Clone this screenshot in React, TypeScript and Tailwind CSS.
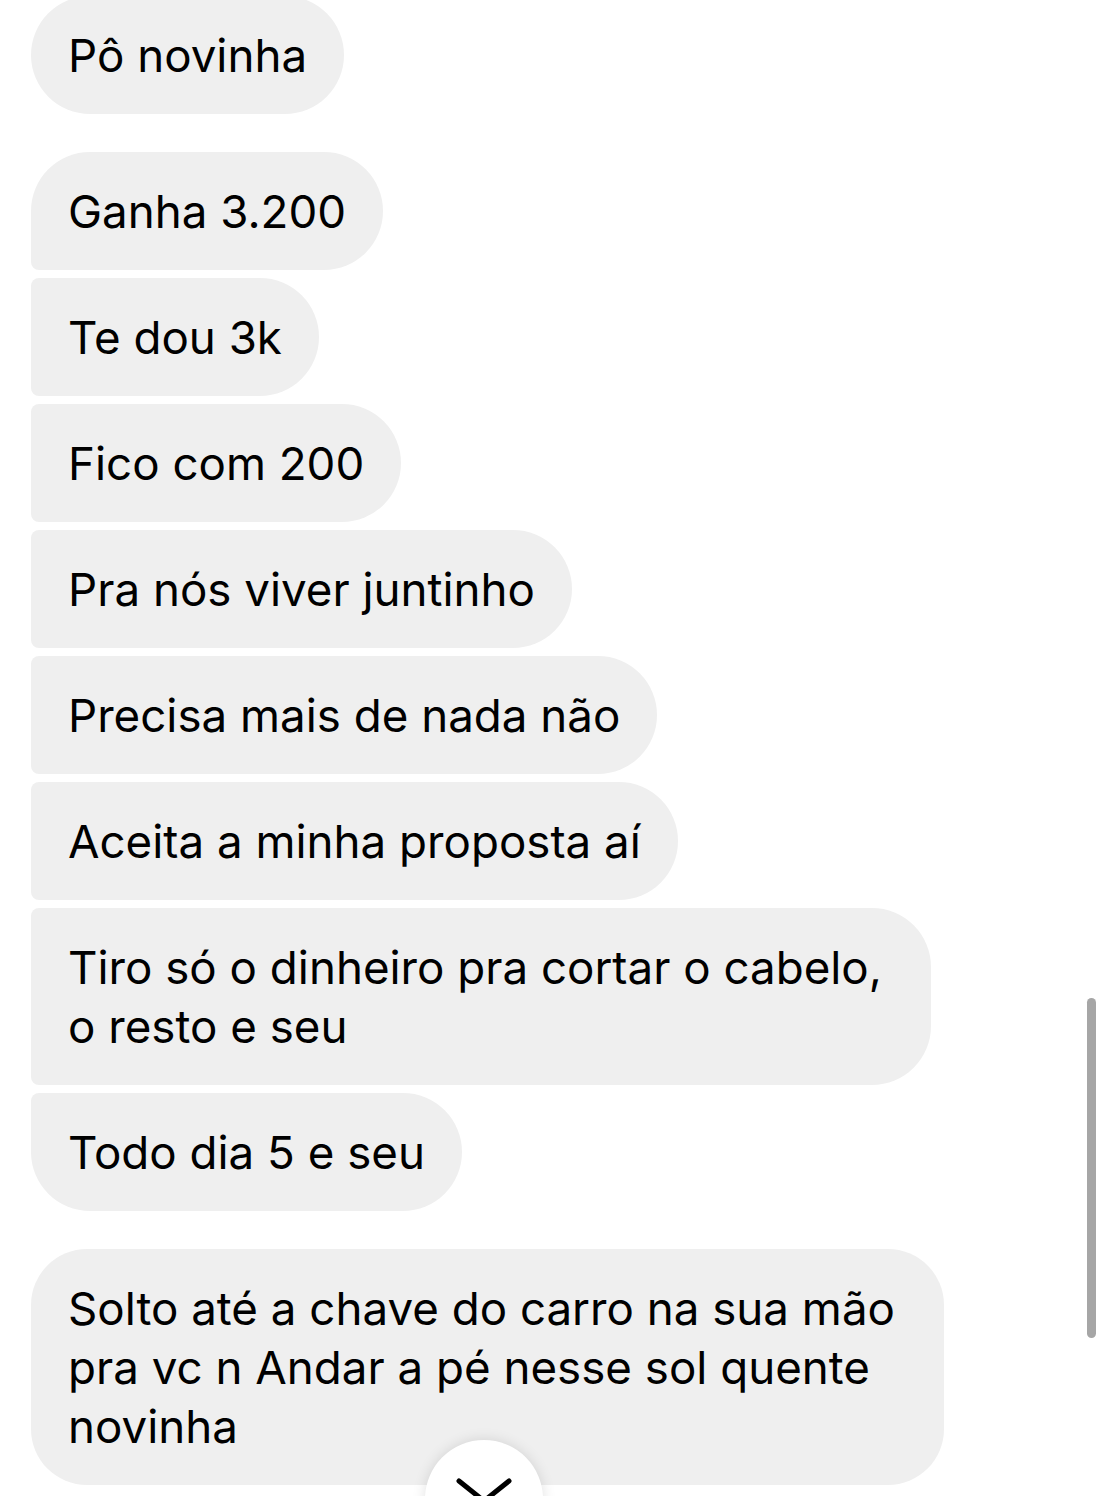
import React from "react";

type B = { lines: string[]; tl: string; bl: string; pr?: string };

const group: B[] = [
  { lines: ["Ganha 3.200"], tl: "rounded-tl-[59px]", bl: "rounded-bl-[8px]" },
  { lines: ["Te dou 3k"], tl: "rounded-tl-[8px]", bl: "rounded-bl-[8px]" },
  { lines: ["Fico com 200"], tl: "rounded-tl-[8px]", bl: "rounded-bl-[8px]" },
  { lines: ["Pra nós viver juntinho"], tl: "rounded-tl-[8px]", bl: "rounded-bl-[8px]" },
  { lines: ["Precisa mais de nada não"], tl: "rounded-tl-[8px]", bl: "rounded-bl-[8px]" },
  { lines: ["Aceita a minha proposta aí"], tl: "rounded-tl-[8px]", bl: "rounded-bl-[8px]" },
  { lines: ["Tiro só o dinheiro pra cortar o cabelo,", "o resto e seu"], tl: "rounded-tl-[8px]", bl: "rounded-bl-[8px]", pr: "pr-[49px]" },
  { lines: ["Todo dia 5 e seu"], tl: "rounded-tl-[8px]", bl: "rounded-bl-[59px]" },
];

function Bubble({ b }: { b: B }) {
  return (
    <div
      className={`w-fit bg-[#efefef] text-black px-[37px] py-[29.5px] text-[45.7px] leading-[59px] rounded-tr-[59px] rounded-br-[59px] ${b.tl} ${b.bl} ${b.pr ?? ""}`}
    >
      {b.lines.map((l, i) => (
        <div key={i} className="whitespace-nowrap">{l}</div>
      ))}
    </div>
  );
}

export default function App() {
  return (
    <div
      className="relative w-[1105px] h-[1496px] overflow-hidden bg-white"
      style={{ fontFamily: "Inter, 'Noto Sans', 'Liberation Sans', sans-serif" }}
    >
      <div className="flex flex-col pl-[31px] -mt-[4px]">
        <div className="w-fit bg-[#efefef] text-black px-[37px] py-[29.5px] text-[45.7px] leading-[59px] rounded-[59px] whitespace-nowrap">
          Pô novinha
        </div>
        <div className="flex flex-col gap-[8px] mt-[38px]">
          {group.map((b, i) => (
            <Bubble key={i} b={b} />
          ))}
        </div>
        <div className="w-fit mt-[38px] bg-[#efefef] text-black pl-[37px] pr-[49px] py-[29.5px] text-[45.7px] leading-[59px] rounded-[56px]">
          <div className="whitespace-nowrap">Solto até a chave do carro na sua mão</div>
          <div className="whitespace-nowrap">pra vc n Andar a pé nesse sol quente</div>
          <div className="whitespace-nowrap">novinha</div>
        </div>
      </div>

      {/* scroll indicator */}
      <div className="absolute left-[1087px] top-[998px] w-[9px] h-[340px] rounded-full bg-[#a6a6a6]" />

      {/* scroll-down button */}
      <div className="absolute left-[425px] top-[1440px] w-[118px] h-[118px] rounded-full bg-white shadow-[0_0_14px_rgba(0,0,0,0.12)] flex justify-center">
        <svg width="64" height="40" viewBox="0 0 64 40" className="mt-[37px]">
          <polyline points="7,4 32,24 57,4" fill="none" stroke="#000" strokeWidth="5" strokeLinecap="round" strokeLinejoin="round" />
        </svg>
      </div>
    </div>
  );
}
